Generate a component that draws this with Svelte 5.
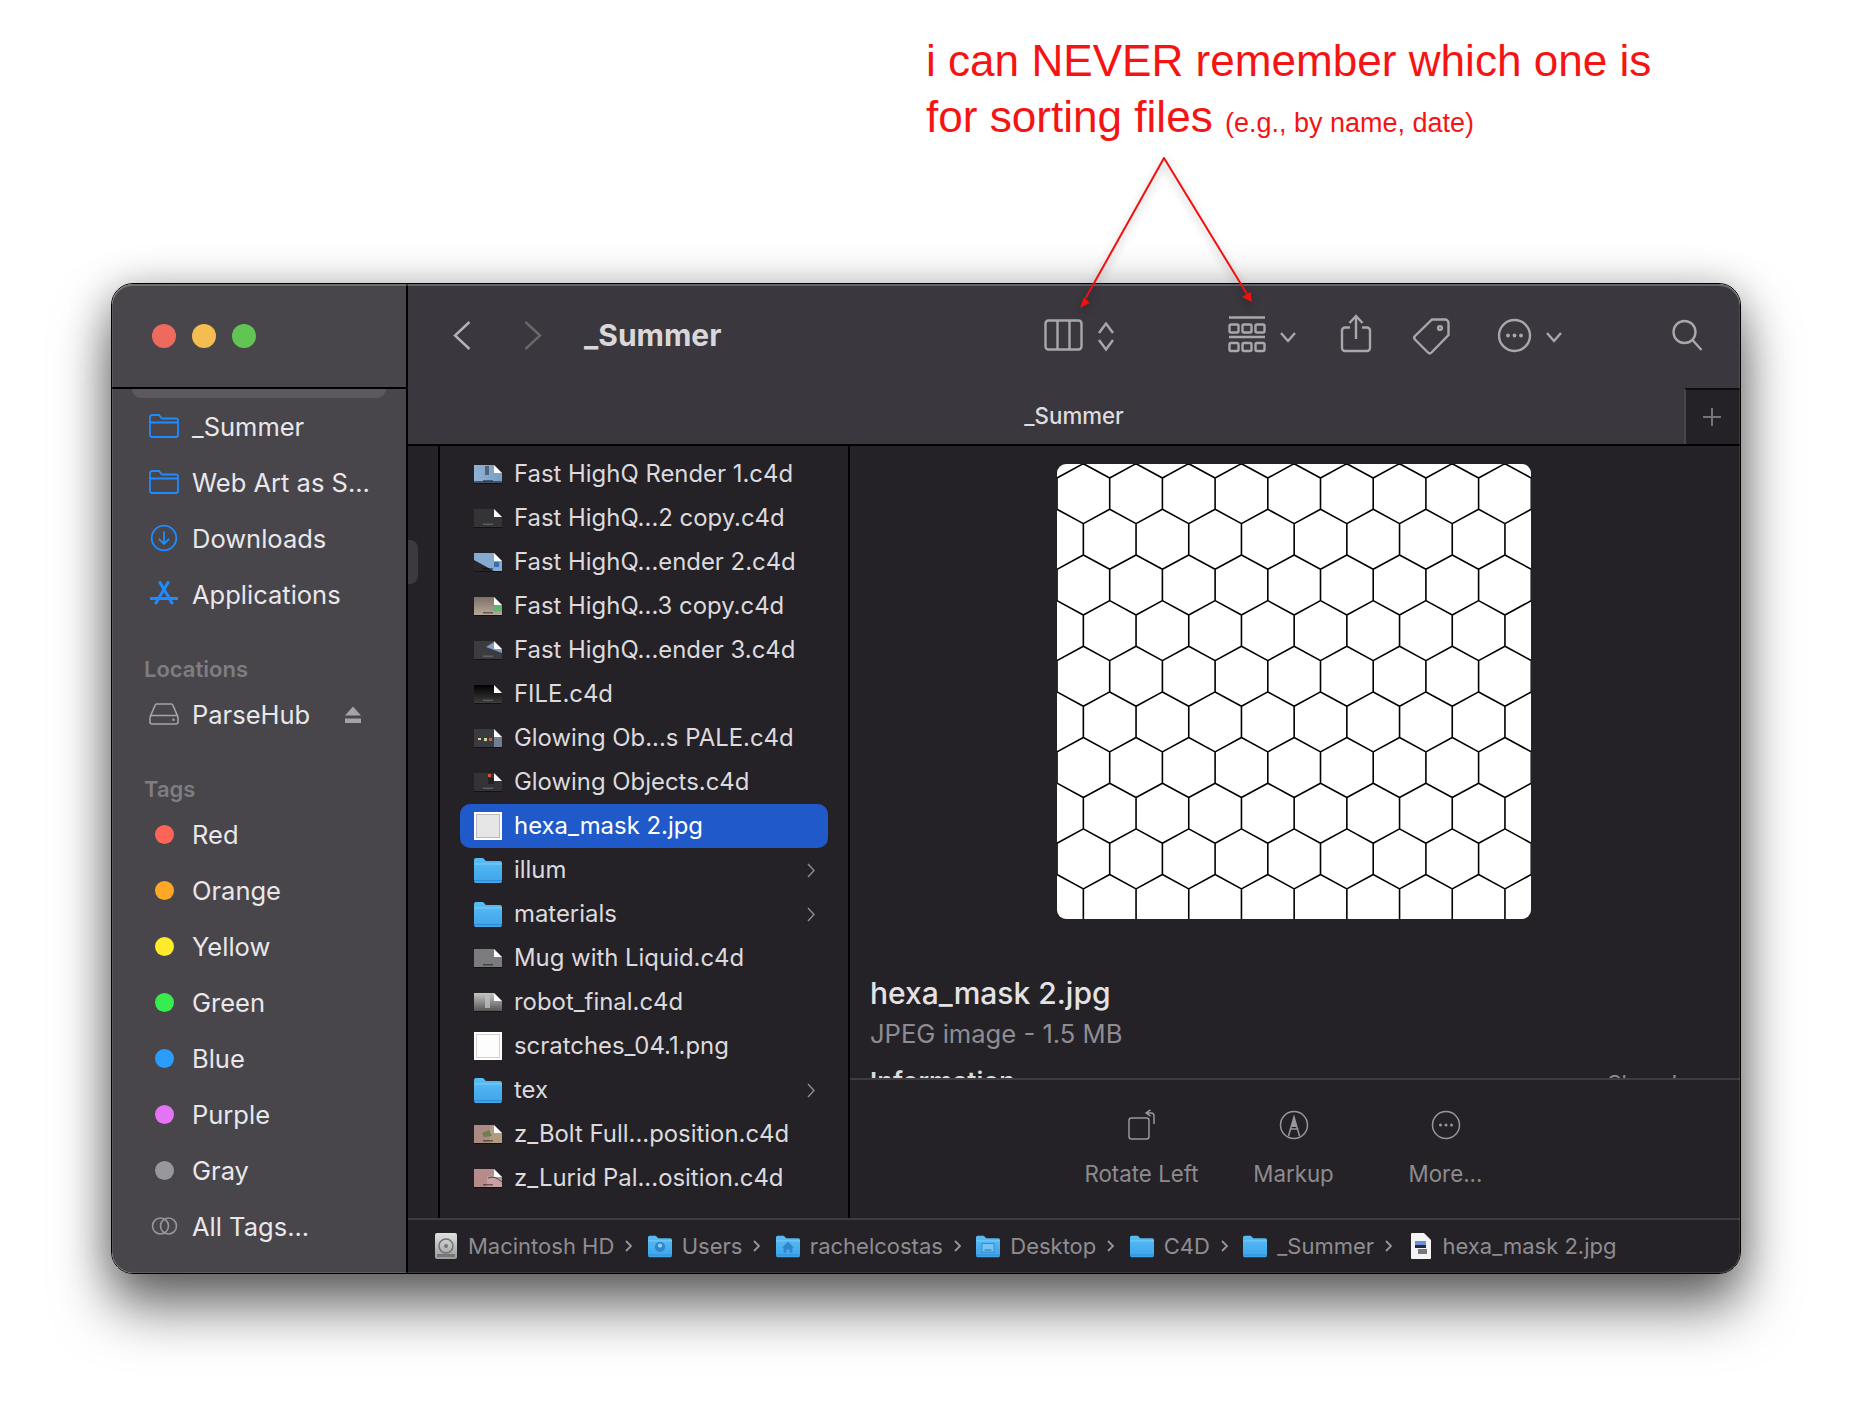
<script>
  const favourites = [
    { label: '_Summer', icon: 'folder' },
    { label: 'Web Art as S...', icon: 'folder' },
    { label: 'Downloads', icon: 'download' },
    { label: 'Applications', icon: 'apps' }
  ];
  const tags = [
    ['Red', '#ff6459'], ['Orange', '#ffa825'], ['Yellow', '#ffeb2a'], ['Green', '#38ec50'],
    ['Blue', '#2b9dff'], ['Purple', '#e474f5'], ['Gray', '#98979c']
  ];
  const mark = { d: 'M9 15h10v1.5H9z', fill: 'rgba(0,0,0,.45)' };
  const markL = { d: 'M9 14.5h10v1.5H9z', fill: 'rgba(200,200,200,.28)' };
  const files = [
    { name: 'Fast HighQ Render 1.c4d', grad: 'url(#t-blue)', parts: [{ d: 'M11 1h4v9h-4z', fill: '#50657a' }, { d: 'M0 16h28v2H0z', fill: '#435468' }, mark] },
    { name: 'Fast HighQ...2 copy.c4d', base: '#343336', parts: [markL] },
    { name: 'Fast HighQ...ender 2.c4d', base: '#86a9cf', parts: [{ d: 'M0 7L20 18H0z', fill: '#26262a' }, { d: 'M20 9h5v5h-5z', fill: '#3a70b0' }, mark] },
    { name: 'Fast HighQ...3 copy.c4d', grad: 'url(#t-tan)', parts: [{ d: 'M19 10l9-3v7h-9z', fill: '#5fb56c' }, mark] },
    { name: 'Fast HighQ...ender 3.c4d', base: '#3b3b40', parts: [{ d: 'M12 6L20 1l8 7v4z', fill: '#7d9cc4' }, markL] },
    { name: 'FILE.c4d', grad: 'url(#t-black)', parts: [markL] },
    { name: 'Glowing Ob...s PALE.c4d', base: '#3a3b3e', parts: [{ d: 'M20 8l8 0v10h-8z', fill: '#6f7e92' }, { d: 'M4 9h3v2H4zM10 9h3v3h-3z', fill: '#d8cfa0' }, { d: 'M15 9h3v3h-3z', fill: '#d05a3c' }] },
    { name: 'Glowing Objects.c4d', base: '#333236', parts: [{ d: 'M14 1h3v3h-3z', fill: '#d9503c' }, { d: 'M14 5h6v6h-6z', fill: '#222' }, markL] },
    { name: 'hexa_mask 2.jpg', sel: true, square: 'hex' },
    { name: 'illum', folder: true },
    { name: 'materials', folder: true },
    { name: 'Mug with Liquid.c4d', base: '#7b7b7d', parts: [mark] },
    { name: 'robot_final.c4d', grad: 'url(#t-grey)', parts: [{ d: 'M11 3h5v12h-5z', fill: 'rgba(190,190,190,.8)' }] },
    { name: 'scratches_04.1.png', square: 'plain' },
    { name: 'tex', folder: true },
    { name: 'z_Bolt Full...position.c4d', base: '#ab8a84', parts: [{ d: 'M16 1h4v17h-4zM20 8h8v10h-8z', fill: '#b29c80' }, { d: 'M8 8l7-3 3 6-8 1z', fill: '#6d7f4e' }, mark] },
    { name: 'z_Lurid Pal...osition.c4d', base: '#b58c8a', parts: [{ d: 'M13 8q8-4 15 3v7H13z', fill: '#c9a0a0' }, { d: 'M14 9q7-3 14 4', fill: 'none', stroke: '#444' }, mark] }
  ];
  const crumbs = [
    { label: 'Macintosh HD', icon: 'hd' },
    { label: 'Users', icon: 'user' },
    { label: 'rachelcostas', icon: 'home' },
    { label: 'Desktop', icon: 'desk' },
    { label: 'C4D', icon: 'plain' },
    { label: '_Summer', icon: 'plain' },
    { label: 'hexa_mask 2.jpg', icon: 'doc' }
  ];

  const W = 52.7;
  const hexPath = (() => {
    let d = '';
    for (let r = -1; r < 11; r++) {
      const top = 14 + 45.65 * r;
      const bot = top + 31.3;
      const off = r % 2 === 0 ? 0 : W / 2;
      for (let i = -1; i < 11; i++) {
        const x = off + W * i;
        d += `M${x} ${top}V${bot}L${x + W / 2} ${bot + 14.35}M${x} ${bot}L${x - W / 2} ${bot + 14.35}`;
      }
    }
    return d;
  })();
</script>

{#snippet folderShape()}
  <path d="M0 5V3a2 2 0 0 1 2-2h7l3 3h14a2 2 0 0 1 2 2v18a2 2 0 0 1-2 2H2a2 2 0 0 1-2-2z" fill="url(#f-blue)" />
  <path d="M0 7h28" stroke="#7fd0f8" stroke-width="1" />
  <path d="M0 23.5h28" stroke="#2f8ad0" stroke-width="1" />
{/snippet}

<svg class="defs" aria-hidden="true">
  <defs>
    <linearGradient id="f-blue" x1="0" y1="0" x2="0" y2="1"><stop offset="0" stop-color="#58bdf4" /><stop offset="1" stop-color="#3fa4ea" /></linearGradient>
    <linearGradient id="t-blue" x1="0" y1="0" x2="1" y2="0"><stop offset="0" stop-color="#8fb1d4" /><stop offset="1" stop-color="#7a9dc4" /></linearGradient>
    <linearGradient id="t-tan" x1="0" y1="0" x2="0" y2="1"><stop offset="0" stop-color="#7d7166" /><stop offset="1" stop-color="#b7a899" /></linearGradient>
    <linearGradient id="t-black" x1="0" y1="0" x2="0" y2="1"><stop offset="0" stop-color="#000" /><stop offset="1" stop-color="#3c3c3e" /></linearGradient>
    <linearGradient id="t-grey" x1="0" y1="0" x2="0" y2="1"><stop offset="0" stop-color="#c5c5c5" /><stop offset="1" stop-color="#555" /></linearGradient>
    <linearGradient id="hd" x1="0" y1="0" x2="0" y2="1"><stop offset="0" stop-color="#dfe0e0" /><stop offset="1" stop-color="#9a9b9b" /></linearGradient>
  </defs>
</svg>

<div class="page">
  <div class="note">
    <p>i can NEVER remember which one is</p>
    <p>for sorting files <small>(e.g., by name, date)</small></p>
  </div>

  <svg class="arrows" viewBox="0 0 1852 400" aria-hidden="true">
    <path d="M1086 297.5L1164 158L1247 294" fill="none" stroke="#f40f0f" stroke-width="2" stroke-linejoin="round" />
    <path d="M1080 308L1084 297L1089.500 303zM1252 302L1242 297L1250.500 292z" fill="#f40f0f" />
  </svg>

  <div class="window">
    <aside class="sidebar">
      <div class="titlebar">
        <span class="light red"></span><span class="light yellow"></span><span class="light green"></span>
      </div>
      <div class="scrolled"></div>
      {#each favourites as f}
        <div class="side-item">
          <span class="side-icon">
            {#if f.icon === 'folder'}
              <svg width="30" height="24" viewBox="0 0 30 24"><path d="M1 4.500V3a2 2 0 0 1 2-2h7l3 3.500h14a2 2 0 0 1 2 2V21a2 2 0 0 1-2 2H3a2 2 0 0 1-2-2zM1 8.500h28" fill="none" stroke="#1e8cff" stroke-width="1.800" /></svg>
            {:else if f.icon === 'download'}
              <svg width="28" height="28" viewBox="0 0 28 28"><circle cx="14" cy="14" r="12.300" fill="none" stroke="#1e8cff" stroke-width="1.800" /><path d="M14 7.500V20M8.800 14.800L14 20l5.200-5.200" fill="none" stroke="#1e8cff" stroke-width="1.800" /></svg>
            {:else}
              <svg width="28" height="26" viewBox="0 0 28 26"><path d="M10 1.500L22 22M18 1.500L6 22M1 17.500h26" fill="none" stroke="#1e8cff" stroke-width="3" stroke-linecap="round" /></svg>
            {/if}
          </span>
          <span>{f.label}</span>
        </div>
      {/each}

      <div class="side-head">Locations</div>
      <div class="side-item">
        <span class="side-icon">
          <svg width="30" height="22" viewBox="0 0 30 22"><path d="M1 14L6 2.500a2 2 0 0 1 2-1.500h14a2 2 0 0 1 2 1.500L29 14M3 12.500h24a2 2 0 0 1 2 2V19a2 2 0 0 1-2 2H3a2 2 0 0 1-2-2v-4.500a2 2 0 0 1 2-2z" fill="none" stroke="#a5a3a7" stroke-width="1.600" /><circle cx="24.500" cy="16.800" r="1.200" fill="#a5a3a7" /></svg>
        </span>
        <span class="grow">ParseHub</span>
        <svg class="eject" width="18" height="18" viewBox="0 0 18 18"><path d="M9 0.500L17 9.500H1zM1 12.500h16v4.500H1z" fill="#a5a3a7" /></svg>
      </div>

      <div class="side-head">Tags</div>
      {#each tags as [name, colour]}
        <div class="side-item">
          <span class="side-icon"><span class="dot" style="background:{colour}"></span></span>
          <span>{name}</span>
        </div>
      {/each}
      <div class="side-item">
        <span class="side-icon">
          <svg width="27" height="20" viewBox="0 0 27 20"><circle cx="9.500" cy="10" r="8" fill="none" stroke="#98969a" stroke-width="1.600" /><circle cx="17.500" cy="10" r="8" fill="none" stroke="#98969a" stroke-width="1.600" /></svg>
        </span>
        <span>All Tags...</span>
      </div>
    </aside>

    <main class="main">
      <header class="toolbar">
        <svg class="ti back" width="18" height="40"><path d="M16.500 6L2 19.500 16.500 33" stroke="#b4b2b6" /></svg>
        <svg class="ti fwd" width="18" height="40"><path d="M1.500 6L16 19.500 1.500 33" stroke="#69676b" /></svg>
        <h1 class="title">_Summer</h1>
        <div class="tools">
          <svg class="ti" width="40" height="40"><rect x="1.500" y="4.500" width="36" height="29" rx="3" /><path d="M13.500 4.500v29M25.500 4.500v29" /></svg>
          <svg class="ti g13" width="18" height="40"><path d="M2 17l7-9.500L16 17M2 24l7 9.500L16 24" /></svg>
          <svg class="ti g113" width="38" height="40"><path d="M1 1.500h36M1 21h36" /><rect x="1.500" y="8.500" width="9" height="8" rx="1.500" /><rect x="14.500" y="8.500" width="9" height="8" rx="1.500" /><rect x="27.500" y="8.500" width="9" height="8" rx="1.500" /><rect x="1.500" y="27" width="9" height="8" rx="1.500" /><rect x="14.500" y="27" width="9" height="8" rx="1.500" /><rect x="27.500" y="27" width="9" height="8" rx="1.500" /></svg>
          <svg class="ti g13" width="18" height="40"><path d="M2 17l7 8 7-8" /></svg>
          <svg class="ti g43" width="32" height="40"><path d="M16 23V0M9.500 7L16 0l6.500 7M10 11.500H5a3 3 0 0 0-3 3V32a3 3 0 0 0 3 3h22a3 3 0 0 0 3-3V14.500a3 3 0 0 0-3-3h-5" /></svg>
          <svg class="ti g41" width="38" height="40"><path d="M19 3.500h13a3.500 3.500 0 0 1 3.500 3.500v12L18.500 36.500a2.500 2.500 0 0 1-3.500 0L2 23.500a2.500 2.500 0 0 1 0-3.500z" /><circle cx="27" cy="12" r="1.900" /></svg>
          <svg class="ti g46" width="35" height="40"><circle cx="17.500" cy="19.500" r="15.500" /><circle class="fill" cx="11" cy="19.500" r="1.900" /><circle class="fill" cx="17.500" cy="19.500" r="1.900" /><circle class="fill" cx="24" cy="19.500" r="1.900" /></svg>
          <svg class="ti g13" width="18" height="40"><path d="M2 17l7 8 7-8" /></svg>
          <svg class="ti g108" width="32" height="40"><circle cx="13.500" cy="16" r="11" /><path d="M21.500 24L30.500 34" /></svg>
        </div>
      </header>

      <div class="tabbar">
        <span class="tab">_Summer</span>
        <span class="plus">
          <svg width="20" height="20" viewBox="0 0 20 20"><path d="M10 1v18M1 10h18" stroke="#77757a" stroke-width="2" /></svg>
        </span>
      </div>

      <div class="body">
        <div class="prev-col"><span class="thumb"></span></div>
        <div class="list">
          {#each files as f}
            <div class="row" class:sel={f.sel}>
              {#if f.folder}
                <svg class="ficon" width="28" height="26" viewBox="0 0 28 26">{@render folderShape()}</svg>
              {:else if f.square}
                <span class="sq">
                  {#if f.square === 'hex'}<span class="sq-hex"></span>{:else}<span class="sq-plain"></span>{/if}
                </span>
              {:else}
                <svg class="ficon" width="28" height="19" viewBox="0 0 28 19">
                  <path d="M0 1h28v17.500H0z" fill="rgba(0,0,0,.5)" transform="translate(0 .5)" />
                  <clipPath id="page-clip"><path d="M0 0H20L28 8V18H0z" /></clipPath>
                  <g clip-path="url(#page-clip)">
                    <rect width="28" height="18" fill={f.grad || f.base} />
                    {#each f.parts as p}
                      <path d={p.d} fill={p.fill} stroke={p.stroke || 'none'} />
                    {/each}
                  </g>
                  <path d="M20 0L28 8H28V0z" fill="#242227" />
                  <path d="M20 0L28 8H20z" fill="#fff" />
                </svg>
              {/if}
              <span class="grow name">{f.name}</span>
              {#if f.folder}
                <svg class="more" width="8" height="15" viewBox="0 0 8 15"><path d="M1 1l6 6.500L1 14" fill="none" stroke="#8c8a8e" stroke-width="1.500" /></svg>
              {/if}
            </div>
          {/each}
        </div>

        <section class="preview">
          <div class="preview-top">
            <svg class="hex" width="474" height="455" viewBox="0 0 474 455"><path d={hexPath} fill="none" stroke="#000" stroke-width="1.600" /></svg>
            <h2 class="pname">hexa_mask 2.jpg</h2>
            <p class="pmeta">JPEG image - 1.5 MB</p>
            <div class="pinfo"><b>Information</b><span>Show Less</span></div>
          </div>
          <div class="actions">
            <div class="action">
              <svg width="30" height="32" viewBox="0 0 30 32"><rect x="2" y="9" width="20" height="21" rx="2.500" fill="none" stroke="#98969a" stroke-width="1.500" /><path d="M27 15V7a3 3 0 0 0-3-3h-4M23.500 .8L19 4l4.500 3.200" fill="none" stroke="#98969a" stroke-width="1.500" /></svg>
              <span>Rotate Left</span>
            </div>
            <div class="action">
              <svg width="30" height="32" viewBox="0 0 30 32"><circle cx="15" cy="16" r="13.500" fill="none" stroke="#98969a" stroke-width="1.500" /><path d="M9.500 27L15 8l5.500 19M10.700 20h8.600" fill="none" stroke="#98969a" stroke-width="1.500" /><path d="M15 8l2.800 10h-5.600z" fill="#98969a" /></svg>
              <span>Markup</span>
            </div>
            <div class="action">
              <svg width="30" height="32" viewBox="0 0 30 32"><circle cx="15" cy="16" r="13.500" fill="none" stroke="#98969a" stroke-width="1.500" /><circle cx="9.500" cy="16" r="1.500" fill="#98969a" /><circle cx="15" cy="16" r="1.500" fill="#98969a" /><circle cx="20.500" cy="16" r="1.500" fill="#98969a" /></svg>
              <span>More...</span>
            </div>
          </div>
        </section>
      </div>

      <footer class="pathbar">
        {#each crumbs as c, i}
          {#if c.icon === 'hd'}
            <svg class="cicon" width="24" height="28" viewBox="0 0 24 28"><rect x="1" y="1" width="22" height="26" rx="2" fill="url(#hd)" /><circle cx="12" cy="14" r="7" fill="none" stroke="#707070" stroke-width="1.500" /><circle cx="12" cy="14" r="2" fill="#777" /><rect x="3" y="22" width="18" height="3" fill="#777" /></svg>
          {:else if c.icon === 'doc'}
            <svg class="cicon doc" width="22" height="28" viewBox="0 0 22 28"><path d="M1 2a1 1 0 0 1 1-1h12l7 7v18a1 1 0 0 1-1 1H2a1 1 0 0 1-1-1z" fill="#f4f4f4" /><rect x="5" y="9" width="11" height="4" fill="#6f8fd8" /><rect x="5" y="13" width="11" height="3" fill="#1f2a44" /><rect x="8" y="17" width="9" height="5" fill="#777" /></svg>
          {:else}
            <svg class="cicon" width="24" height="26" viewBox="0 0 28 26">
              {@render folderShape()}
              {#if c.icon === 'user'}<circle cx="14" cy="14" r="6" fill="#2f86c8" /><circle cx="14" cy="12.500" r="2.500" fill="#8fd0f5" />{/if}
              {#if c.icon === 'home'}<path d="M14 8l7 7h-2v6h-3v-4h-4v4H9v-6H7z" fill="#2f86c8" />{/if}
              {#if c.icon === 'desk'}<rect x="7" y="10" width="14" height="10" fill="#78c4f2" stroke="#2f86c8" /><rect x="10" y="17" width="8" height="1.500" fill="#2f86c8" />{/if}
            </svg>
          {/if}
          <span class="clabel">{c.label}</span>
          {#if i < crumbs.length - 1}
            <svg class="csep" width="9" height="14" viewBox="0 0 9 14"><path d="M2 2l5 5-5 5" fill="none" stroke="#98969a" stroke-width="1.800" /></svg>
          {/if}
        {/each}
      </footer>
    </main>
    <div class="edge"></div>
  </div>
</div>

<style>
  :global(body) { margin: 0; background: #fff; }
  .defs { position: absolute; width: 0; height: 0; }
  .page {
    position: relative;
    width: 1852px;
    height: 1422px;
    overflow: hidden;
    background: #fff;
    font-family: Inter, "Noto Sans", sans-serif;
  }
  .note {
    padding: 33px 0 0 926px;
    height: 111px;
    color: #f51414;
    font-family: "Liberation Sans", Arial, sans-serif;
    font-size: 44.1px;
    line-height: 56px;
    box-sizing: content-box;
  }
  .note p { margin: 0; white-space: nowrap; }
  .note small { font-size: 27px; }
  .arrows {
    position: absolute;
    left: 0;
    top: 0;
    width: 1852px;
    height: 400px;
    z-index: 2;
    pointer-events: none;
    filter: drop-shadow(0 4px 4px rgba(0, 0, 0, .32));
  }
  .window {
    position: relative;
    margin: 139px 0 0 111px;
    width: 1630px;
    height: 991px;
    box-sizing: border-box;
    border: 1px solid #000;
    border-radius: 22px;
    display: flex;
    overflow: hidden;
    box-shadow: 0 34px 56px rgba(0, 0, 0, .55), 0 4px 40px rgba(0, 0, 0, .28);
  }
  .edge {
    position: absolute;
    inset: 0;
    border-radius: 21px;
    box-shadow: inset 0 2px 0 rgba(255, 255, 255, .22), inset 1px 0 0 rgba(255, 255, 255, .1), inset -1px 0 0 rgba(255, 255, 255, .1), inset 0 -1px 0 rgba(255, 255, 255, .12);
    pointer-events: none;
  }
  .sidebar {
    width: 296px;
    flex: none;
    box-sizing: border-box;
    background: #48464a;
    border-right: 2px solid #000;
    color: #e9e7ea;
    font-size: 25.5px;
  }
  .titlebar {
    height: 105px;
    box-sizing: border-box;
    border-bottom: 2px solid #000;
    display: flex;
    align-items: center;
    gap: 16px;
    padding: 0 0 0 40px;
  }
  .light { width: 24px; height: 24px; border-radius: 50%; }
  .red { background: #ee6a5f; }
  .yellow { background: #f5bd4f; }
  .green { background: #61c454; }
  .scrolled {
    height: 9px;
    margin: 0 20px;
    background: #5b595d;
    border-radius: 0 0 10px 10px;
  }
  .side-item {
    height: 56px;
    display: flex;
    align-items: center;
    padding-left: 37px;
    gap: 13px;
    white-space: nowrap;
  }
  .side-icon { width: 30px; flex: none; display: flex; justify-content: center; align-items: center; }
  .side-head {
    margin-top: 30px;
    height: 34px;
    line-height: 34px;
    padding-left: 32px;
    font-size: 22px;
    font-weight: 600;
    color: #7f7d81;
  }
  .dot { width: 19px; height: 19px; border-radius: 50%; }
  .grow { flex: 1; min-width: 0; white-space: nowrap; }
  .eject { margin-right: 44px; margin-top: 1px; }
  .main { flex: 1; min-width: 0; display: flex; flex-direction: column; background: #3a383e; }
  .toolbar { height: 104px; flex: none; display: flex; align-items: center; padding-right: 37px; }
  .ti { flex: none; overflow: visible; fill: none; stroke: #a9a7ab; stroke-width: 2.400; }
  .ti .fill { fill: #a9a7ab; stroke: none; }
  .back { margin-left: 45px; }
  .fwd { margin-left: 53px; }
  .title { margin: -2px 0 0 42px; font-size: 30px; font-weight: 700; color: #d9d7da; }
  .tools { margin-left: auto; display: flex; align-items: center; }
  .g13 { margin-left: 13px; }
  .g41 { margin-left: 41px; }
  .g43 { margin-left: 43px; }
  .g46 { margin-left: 46px; }
  .g108 { margin-left: 108px; }
  .g113 { margin-left: 113px; }
  .tabbar { height: 58px; flex: none; display: flex; border-bottom: 2px solid #000; box-sizing: border-box; }
  .tab { flex: 1; text-align: center; line-height: 56px; font-size: 22.300px; font-weight: 500; color: #dedcdf; padding-left: 56px; }
  .plus {
    width: 56px;
    flex: none;
    background: #242227;
    border-top: 2px solid #0e0d10;
    border-left: 2px solid #48464a;
    box-sizing: border-box;
    padding-right: 2px;
    display: flex;
    align-items: center;
    justify-content: center;
  }
  .body { flex: 1; min-height: 0; display: flex; background: #242227; }
  .prev-col { width: 30px; flex: none; border-right: 2px solid #000; padding-top: 94px; }
  .thumb { display: block; width: 10px; height: 44px; background: #3c3a3e; border-radius: 0 8px 8px 0; }
  .list { width: 410px; flex: none; box-sizing: border-box; padding: 6px 20px 0 20px; border-right: 2px solid #000; color: #dcdadd; font-size: 23.900px; }
  .row { height: 44px; display: flex; align-items: center; padding: 0 14px; gap: 12px; border-radius: 10px; }
  .row.sel { background: #2059c9; color: #fff; }
  .name { margin-top: -2px; }
  .ficon { flex: none; }
  .sq { width: 28px; height: 28px; background: #fff; flex: none; display: block; padding: 2px; box-sizing: border-box; }
  .sq-hex { display: block; height: 100%; background: #e6e6e6; border: 1px solid #bbb; box-sizing: border-box; }
  .sq-plain { display: block; height: 100%; background: #fdfdfd; border: 1px solid #d0d0d0; box-sizing: border-box; }
  .more { flex: none; margin-right: -1px; }
  .preview { flex: 1; min-width: 0; display: flex; flex-direction: column; }
  .preview-top { height: 634px; flex: none; overflow: hidden; padding: 18px 20px 0 20px; box-sizing: border-box; border-bottom: 2px solid #3e3c40; }
  .hex { display: block; margin: 0 0 0 187px; background: #fff; border-radius: 9px; }
  .pname { margin: 55px 0 0; font-size: 30px; line-height: 38px; font-weight: 500; color: #e4e2e5; }
  .pmeta { margin: 4px 0 0; font-size: 25.600px; line-height: 36px; color: #8e8c90; }
  .pinfo { display: flex; justify-content: space-between; align-items: baseline; margin-top: 15px; font-size: 26px; line-height: 30px; color: #dcdadd; }
  .pinfo b { font-weight: 600; }
  .pinfo span { font-size: 22px; font-weight: 400; color: #8e8c90; }
  .actions { flex: 1; display: flex; justify-content: center; padding: 29px 3px 0 0; }
  .action { width: 152px; display: flex; flex-direction: column; align-items: center; gap: 19px; font-size: 22.300px; color: #8d8b8f; white-space: nowrap; }
  .pathbar {
    height: 55px;
    flex: none;
    box-sizing: border-box;
    border-top: 2px solid #3e3c40;
    background: #242227;
    display: flex;
    align-items: center;
    padding: 0 0 2px 26px;
    font-size: 22px;
    color: #8f8d91;
    white-space: nowrap;
  }
  .cicon { flex: none; margin-right: 10px; }
  .doc { margin-left: 3px; }
  .csep { flex: none; margin: 0 14.400px 0 10px; }
</style>
